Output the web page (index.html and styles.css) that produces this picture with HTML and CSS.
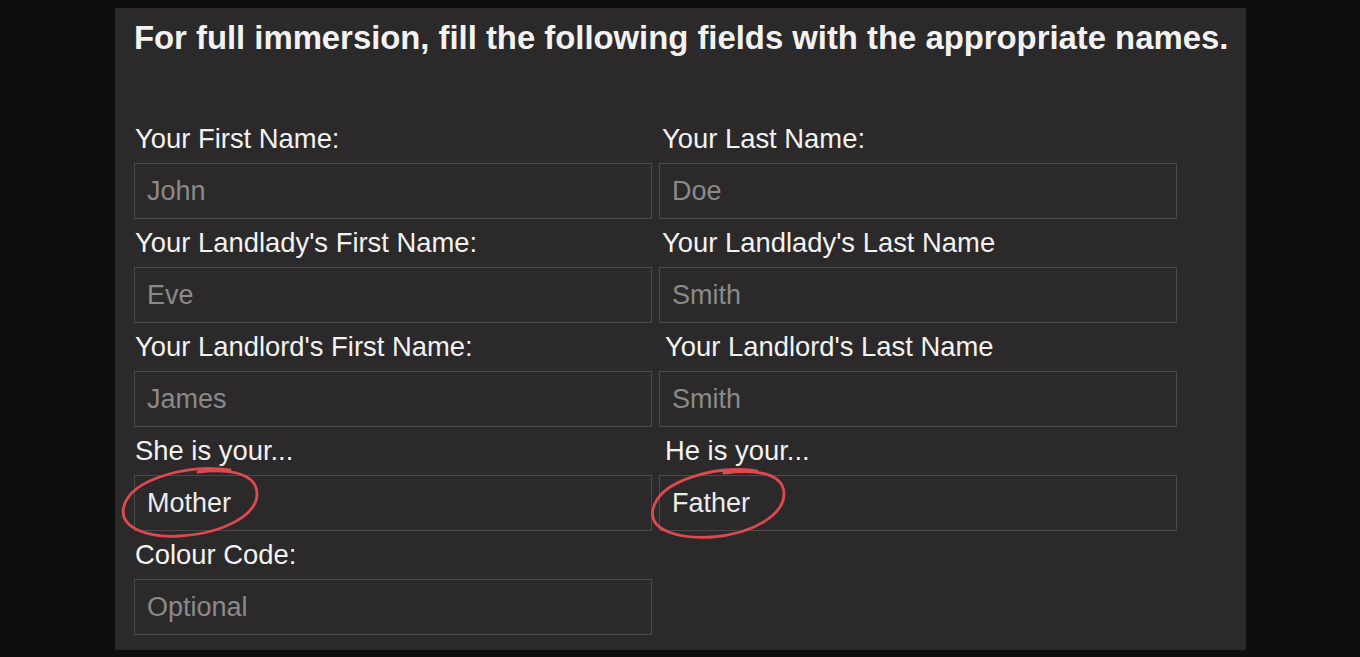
FILE: index.html
```html
<!DOCTYPE html>
<html lang="en">
<head>
<meta charset="utf-8">
<title>Names</title>
<link rel="stylesheet" href="styles.css">
</head>
<body>
<div class="panel">
  <h1 class="title">For full immersion, fill the following fields with the appropriate names.</h1>
  <form class="grid">
    <div class="field">
      <label class="label">Your First Name:</label>
      <input class="input" type="text" placeholder="John">
    </div>
    <div class="field right">
      <label class="label">Your Last Name:</label>
      <input class="input" type="text" placeholder="Doe">
    </div>
    <div class="field">
      <label class="label">Your Landlady's First Name:</label>
      <input class="input" type="text" placeholder="Eve">
    </div>
    <div class="field right">
      <label class="label">Your Landlady's Last Name</label>
      <input class="input" type="text" placeholder="Smith">
    </div>
    <div class="field">
      <label class="label">Your Landlord's First Name:</label>
      <input class="input" type="text" placeholder="James">
    </div>
    <div class="field right">
      <label class="label indent">Your Landlord's Last Name</label>
      <input class="input" type="text" placeholder="Smith">
    </div>
    <div class="field">
      <label class="label">She is your...</label>
      <input class="input" type="text" value="Mother">
    </div>
    <div class="field right">
      <label class="label indent">He is your...</label>
      <input class="input" type="text" value="Father">
    </div>
    <div class="field">
      <label class="label">Colour Code:</label>
      <input class="input" type="text" placeholder="Optional">
    </div>
  </form>
</div>
<svg class="marks" width="1360" height="657" viewBox="0 0 1360 657" fill="none">
  <path d="M230 470 C190 464 132 478 124 506 C118 528 148 538 180 536 C226 533 257 514 257 494 C257 476 236 468 198 472" stroke="#dc4a4f" stroke-width="2.8" stroke-linecap="round"/>
  <path d="M757 471 C716 465 660 480 653 509 C648 531 680 539 712 537 C754 534 784 514 784 494 C784 476 762 468 724 473" stroke="#dc4a4f" stroke-width="2.8" stroke-linecap="round"/>
</svg>
</body>
</html>
```
FILE: styles.css
```css
html, body {
  margin: 0;
  padding: 0;
  background: #0e0e0e;
}
body {
  position: relative;
  width: 1360px;
  height: 657px;
  overflow: hidden;
  font-family: "Liberation Sans", Arial, sans-serif;
}
.panel {
  box-sizing: border-box;
  margin: 8px 0 0 115px;
  width: 1131px;
  height: 642px;
  background: #2b292a;
  padding: 0 19px;
}
.title {
  margin: 0;
  padding-top: 11px;
  height: 96px;
  font-size: 32.9px;
  line-height: 38px;
  font-weight: 700;
  color: #f2f2f2;
  white-space: nowrap;
  letter-spacing: -0.03px;
}
.grid {
  display: grid;
  grid-template-columns: 518px 518px;
  column-gap: 7px;
  margin: 0;
}
.field {
  display: flex;
  flex-direction: column;
}
.label {
  display: block;
  height: 48px;
  font-size: 27.4px;
  line-height: 48px;
  color: #f2f2f2;
  padding-left: 1px;
  white-space: nowrap;
}
.right .label {
  padding-left: 3px;
}
.right .label.indent {
  padding-left: 6px;
}
.input {
  box-sizing: border-box;
  height: 56px;
  width: 518px;
  margin: 0;
  border: 1px solid #4b4a4b;
  background: #2b292a;
  color: #ececec;
  font-family: "Liberation Sans", Arial, sans-serif;
  font-size: 27px;
  padding: 0 12px;
  outline: none;
}
.input::placeholder {
  color: #8a8a8a;
  opacity: 1;
}
.marks {
  position: absolute;
  left: 0;
  top: 0;
  pointer-events: none;
}
```
